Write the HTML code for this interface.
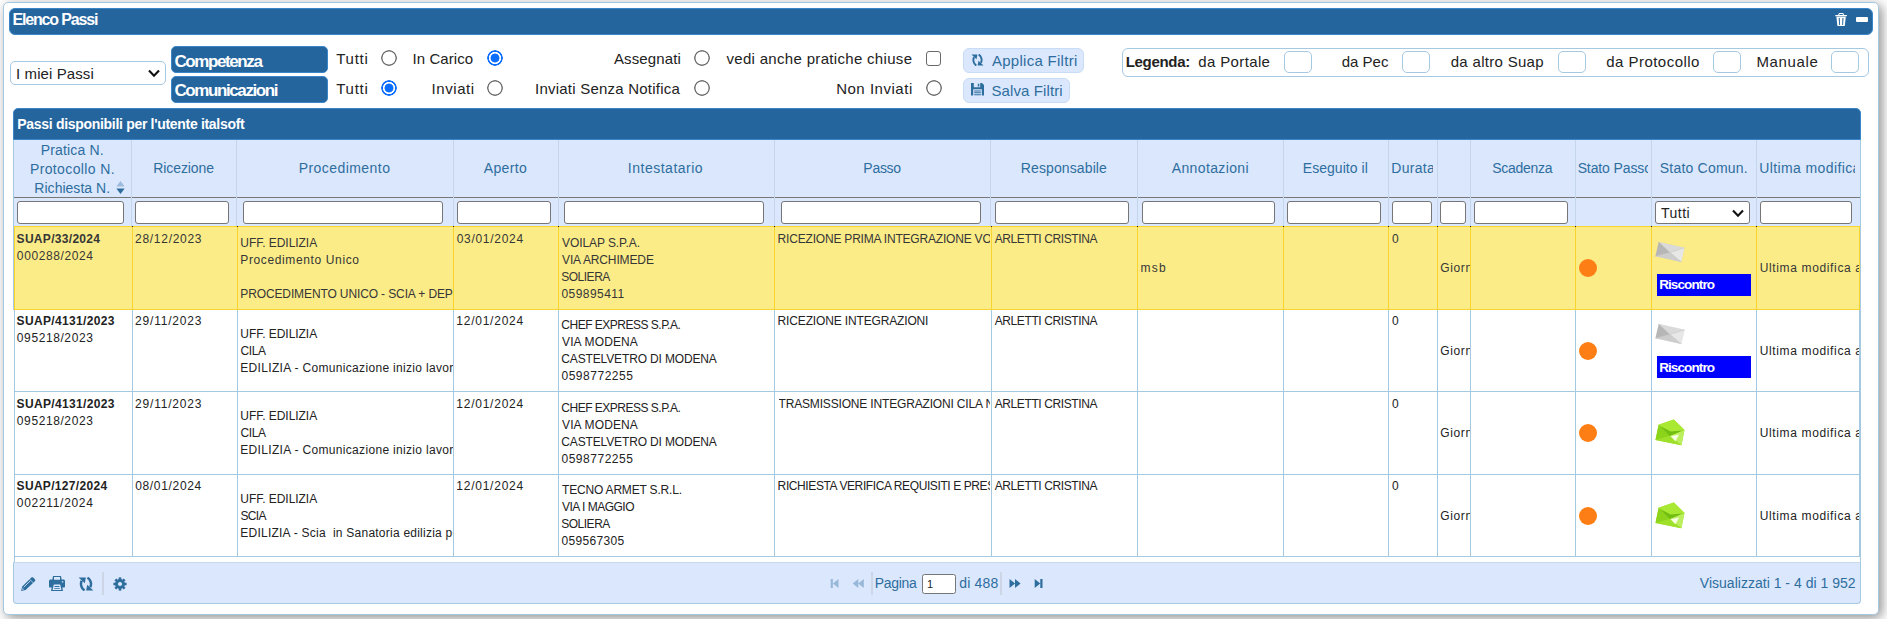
<!DOCTYPE html>
<html lang="it"><head><meta charset="utf-8"><title>Elenco Passi</title>
<style>
html,body{margin:0;padding:0}
body{width:1887px;height:619px;overflow:hidden;position:relative;background:#fff;font-family:"Liberation Sans", sans-serif}
div,span.t,svg.a,input,select{position:absolute;box-sizing:border-box}
span.t{white-space:pre;line-height:20px;height:20px}

.bar{background:#24659e;border:1px solid #3b86c8}
input.f,select.f{margin:0;padding:0 3px;border:1px solid #767676;border-radius:3px;background:#fff;height:23px;top:201px;font:12px "Liberation Sans", sans-serif;appearance:none;-webkit-appearance:none;outline:none}
input.r{appearance:none;-webkit-appearance:none;margin:0;width:16px;height:16px;border:0;border-radius:50%;background:radial-gradient(circle,#fff 0,#fff 6.2px,#707070 6.8px,#707070 7.6px,rgba(112,112,112,0) 8.2px)}
input.r.c{background:radial-gradient(circle,#0d6efd 0,#0d6efd 4.1px,#fff 4.8px,#fff 5.8px,#0d6efd 6.4px,#0d6efd 7.5px,rgba(13,110,253,0) 8.1px)}
input.k{appearance:none;-webkit-appearance:none;margin:0;width:15px;height:15px;border:1px solid #6a6a6a;border-radius:3px;background:#fff}
.lg{border:1px solid #a6c9e2;border-radius:5px;background:#fff;width:28px;height:22px;top:51px}
.btn{background:#dbe7fd;border:1px solid #c9dcf5;border-radius:6px}
.vs{width:1px;background:#c5d6ea;top:140px;height:86px}
.vb{width:1px;background:#a6c9e2}
.hb{height:1px;background:#a6c9e2}

</style></head><body>
<div style="left:3px;top:2px;width:1876px;height:613px;background:#fff;border:1px solid #a6c9e2;border-radius:5px;box-shadow:3px 3px 12px rgba(0,0,0,.44)"></div>
<div class="bar" style="left:9px;top:8px;width:1864px;height:27px;border-radius:6px"></div>
<svg class="a" style="left:1834.6px;top:12.8px" width="12.2" height="13.4" viewBox="0 0 12.2 13.4"><path fill="#fff" fill-rule="evenodd" d="M4 0h4.200l.9 1.900h2.800v1.300H.3V1.900h2.800zM4.600.9l-.4 1h3.800l-.4-1zM1.400 3.700h9.400l-.9 8.600c-.1.600-.5 1.100-1.100 1.100H3.400c-.6 0-1-.5-1.100-1.100zM3.700 4.900l.4 7h.9l-.2-7zm3.700 0-.2 7h.9l.4-7z"/></svg>
<div style="left:1856px;top:17px;width:11.5px;height:5px;background:#fff;border-radius:1px"></div>
<select class="f" style="left:10px;top:61px;width:156px;height:24px;border:1px solid #a6c9e2;border-radius:5px;font-size:15px;color:#222;padding:0 0 0 5px;letter-spacing:.1px"><option>I miei Passi</option></select>
<svg class="a" style="left:147px;top:68px" width="14" height="11" viewBox="0 0 14 11"><path d="M2 2.6 7 7.8 12 2.6" fill="none" stroke="#111" stroke-width="2.1" stroke-linecap="butt"/></svg>
<div class="bar" style="left:171px;top:46px;width:157px;height:27px;border-radius:5px"></div>
<div class="bar" style="left:171px;top:76px;width:157px;height:27px;border-radius:5px"></div>
<input type="radio" class="r" name="a" style="left:381px;top:50px">
<input type="radio" class="r c" name="a" checked style="left:487px;top:50px">
<input type="radio" class="r" name="a" style="left:694px;top:50px">
<input type="checkbox" class="k" style="left:926px;top:51px">
<input type="radio" class="r c" name="b" checked style="left:381px;top:80px">
<input type="radio" class="r" name="b" style="left:487px;top:80px">
<input type="radio" class="r" name="b" style="left:694px;top:80px">
<input type="radio" class="r" name="b" style="left:925.5px;top:80px">
<div class="btn" style="left:963px;top:48px;width:121px;height:25px"></div>
<div class="btn" style="left:963px;top:78px;width:107px;height:25px"></div>
<svg class="a" style="left:971px;top:53.5px" width="13" height="12" viewBox="0 0 13 12"><g fill="#2e6e9e"><path d="M5.300 11.500C2.700 9.700 1.700 6.200 3 3.200" fill="none" stroke="#2e6e9e" stroke-width="2"/><path d="M.5.500h5.900l-.9 4.800z"/><g transform="rotate(180 6.500 6)"><path d="M5.300 11.500C2.700 9.700 1.700 6.200 3 3.200" fill="none" stroke="#2e6e9e" stroke-width="2"/><path d="M.5.500h5.900l-.9 4.800z"/></g></g></svg>
<svg class="a" style="left:971px;top:83.3px" width="13" height="12.5" viewBox="0 0 13 12.5"><path fill="#2e6e9e" fill-rule="evenodd" d="M0 0h11l2 2v10.5H0zM2.8 0v4.2h6.4V0zM6.8 .8h1.5v2.6H6.8zM2.2 6.2v6.3h8.6V6.2zM3.2 7.4h6.6v1H3.2zm0 1.9h6.6v1H3.2zm0 1.9h6.6v1H3.2z"/></svg>
<div style="left:1122px;top:48px;width:747px;height:29px;border:1px solid #a6c9e2;border-radius:6px;background:#fff"></div>
<div class="lg" style="left:1284px"></div>
<div class="lg" style="left:1402px"></div>
<div class="lg" style="left:1558px"></div>
<div class="lg" style="left:1713px"></div>
<div class="lg" style="left:1831px"></div>
<div class="bar" style="left:13px;top:108px;width:1848px;height:32px;border-radius:5px 5px 0 0"></div>
<div style="left:14px;top:140px;width:1847px;height:86px;background:#dbe7fd"></div>
<div style="left:14px;top:197px;width:1847px;height:1px;background:#777"></div>
<div class="vs" style="left:131px"></div>
<div class="vs" style="left:236px"></div>
<div class="vs" style="left:453px"></div>
<div class="vs" style="left:558px"></div>
<div class="vs" style="left:774px"></div>
<div class="vs" style="left:990px"></div>
<div class="vs" style="left:1137px"></div>
<div class="vs" style="left:1283px"></div>
<div class="vs" style="left:1388px"></div>
<div class="vs" style="left:1437px"></div>
<div class="vs" style="left:1470px"></div>
<div class="vs" style="left:1575px"></div>
<div class="vs" style="left:1651px"></div>
<div class="vs" style="left:1756px"></div>
<svg class="a" style="left:115.5px;top:181px" width="9" height="13" viewBox="0 0 9 13"><path d="M4.5 0 8.6 5.6H.4z" fill="#9dbbdc"/><path d="M4.5 13 8.6 7.6H.4z" fill="#2e6e9e"/></svg>
<input class="f" type="text" style="left:17px;width:107px">
<input class="f" type="text" style="left:135px;width:94px">
<input class="f" type="text" style="left:243px;width:200px">
<input class="f" type="text" style="left:457px;width:94px">
<input class="f" type="text" style="left:564px;width:200px">
<input class="f" type="text" style="left:781px;width:200px">
<input class="f" type="text" style="left:995px;width:134px">
<input class="f" type="text" style="left:1142px;width:133px">
<input class="f" type="text" style="left:1287px;width:94px">
<input class="f" type="text" style="left:1392px;width:40px">
<input class="f" type="text" style="left:1440px;width:26px">
<input class="f" type="text" style="left:1474px;width:94px">
<input class="f" type="text" style="left:1760px;width:92px">
<select class="f" style="left:1655px;width:95px;font-size:14px;letter-spacing:.5px;color:#222;padding-left:5px"><option>Tutti</option></select>
<svg class="a" style="left:1731px;top:207.5px" width="14" height="11" viewBox="0 0 14 11"><path d="M2 2.6 7 7.8 12 2.6" fill="none" stroke="#111" stroke-width="2.1"/></svg>
<div style="left:13px;top:140px;width:1px;height:170px;background:#a6c9e2"></div>
<div style="left:14px;top:310px;width:1px;height:253px;background:#a6c9e2"></div>
<div style="left:1859px;top:310px;width:1px;height:247px;background:#a6c9e2"></div>
<div style="left:1860px;top:140px;width:1px;height:460px;background:#a6c9e2"></div>
<div style="left:14px;top:226px;width:1846px;height:84px;background:#fbec88;border:1px solid #fad42e"></div>
<div style="left:132px;top:226px;width:1px;height:84px;background:#fad42e"></div>
<div class="vb" style="left:132px;top:310px;height:247px"></div>
<div style="left:132px;top:226px;width:1px;height:1px;background:#222"></div>
<div style="left:237px;top:226px;width:1px;height:84px;background:#fad42e"></div>
<div class="vb" style="left:237px;top:310px;height:247px"></div>
<div style="left:237px;top:226px;width:1px;height:1px;background:#222"></div>
<div style="left:453px;top:226px;width:1px;height:84px;background:#fad42e"></div>
<div class="vb" style="left:453px;top:310px;height:247px"></div>
<div style="left:453px;top:226px;width:1px;height:1px;background:#222"></div>
<div style="left:558px;top:226px;width:1px;height:84px;background:#fad42e"></div>
<div class="vb" style="left:558px;top:310px;height:247px"></div>
<div style="left:558px;top:226px;width:1px;height:1px;background:#222"></div>
<div style="left:774px;top:226px;width:1px;height:84px;background:#fad42e"></div>
<div class="vb" style="left:774px;top:310px;height:247px"></div>
<div style="left:774px;top:226px;width:1px;height:1px;background:#222"></div>
<div style="left:991px;top:226px;width:1px;height:84px;background:#fad42e"></div>
<div class="vb" style="left:991px;top:310px;height:247px"></div>
<div style="left:991px;top:226px;width:1px;height:1px;background:#222"></div>
<div style="left:1137px;top:226px;width:1px;height:84px;background:#fad42e"></div>
<div class="vb" style="left:1137px;top:310px;height:247px"></div>
<div style="left:1137px;top:226px;width:1px;height:1px;background:#222"></div>
<div style="left:1283px;top:226px;width:1px;height:84px;background:#fad42e"></div>
<div class="vb" style="left:1283px;top:310px;height:247px"></div>
<div style="left:1283px;top:226px;width:1px;height:1px;background:#222"></div>
<div style="left:1388px;top:226px;width:1px;height:84px;background:#fad42e"></div>
<div class="vb" style="left:1388px;top:310px;height:247px"></div>
<div style="left:1388px;top:226px;width:1px;height:1px;background:#222"></div>
<div style="left:1437px;top:226px;width:1px;height:84px;background:#fad42e"></div>
<div class="vb" style="left:1437px;top:310px;height:247px"></div>
<div style="left:1437px;top:226px;width:1px;height:1px;background:#222"></div>
<div style="left:1470px;top:226px;width:1px;height:84px;background:#fad42e"></div>
<div class="vb" style="left:1470px;top:310px;height:247px"></div>
<div style="left:1470px;top:226px;width:1px;height:1px;background:#222"></div>
<div style="left:1575px;top:226px;width:1px;height:84px;background:#fad42e"></div>
<div class="vb" style="left:1575px;top:310px;height:247px"></div>
<div style="left:1575px;top:226px;width:1px;height:1px;background:#222"></div>
<div style="left:1651px;top:226px;width:1px;height:84px;background:#fad42e"></div>
<div class="vb" style="left:1651px;top:310px;height:247px"></div>
<div style="left:1651px;top:226px;width:1px;height:1px;background:#222"></div>
<div style="left:1756px;top:226px;width:1px;height:84px;background:#fad42e"></div>
<div class="vb" style="left:1756px;top:310px;height:247px"></div>
<div style="left:1756px;top:226px;width:1px;height:1px;background:#222"></div>
<div class="hb" style="left:14px;top:391px;width:1847px"></div>
<div class="hb" style="left:14px;top:474px;width:1847px"></div>
<div class="hb" style="left:14px;top:556px;width:1847px"></div>
<div style="left:1579px;top:258.8px;width:18px;height:18px;border-radius:50%;background:#fd7e14"></div>
<svg class="a" style="left:1652.9px;top:237.4px" width="34" height="30" viewBox="-17 -15 34 30"><g transform="rotate(12.9)"><rect x="-13.4" y="-7.500" width="26.800" height="15" fill="#bdbdbd" opacity=".35"/><path d="M-13.200-7.300H13.200L0 .4z" fill="#dadada"/><path d="M13.200-7.300V7.300L0 .4z" fill="#e7e7e7"/><path d="M-13.200 7.300H13.200L0 .4z" fill="#cdcdcd"/><path d="M-13.200-7.300V7.300L0 .4z" fill="#b6b6b6"/><path d="M-13.200-7.300 0 .4 13.200-7.300M-13.200 7.300 0 .4 13.200 7.300" fill="none" stroke="#c4c4c4" stroke-width=".5"/></g></svg>
<div style="left:1657px;top:274px;width:94px;height:22px;background:#0000ff"></div>
<div style="left:1579px;top:341.8px;width:18px;height:18px;border-radius:50%;background:#fd7e14"></div>
<svg class="a" style="left:1652.9px;top:319.4px" width="34" height="30" viewBox="-17 -15 34 30"><g transform="rotate(12.9)"><rect x="-13.4" y="-7.500" width="26.800" height="15" fill="#bdbdbd" opacity=".35"/><path d="M-13.200-7.300H13.200L0 .4z" fill="#dadada"/><path d="M13.200-7.300V7.300L0 .4z" fill="#e7e7e7"/><path d="M-13.200 7.300H13.200L0 .4z" fill="#cdcdcd"/><path d="M-13.200-7.300V7.300L0 .4z" fill="#b6b6b6"/><path d="M-13.200-7.300 0 .4 13.200-7.300M-13.200 7.300 0 .4 13.200 7.300" fill="none" stroke="#c4c4c4" stroke-width=".5"/></g></svg>
<div style="left:1657px;top:356px;width:94px;height:22px;background:#0000ff"></div>
<div style="left:1579px;top:423.8px;width:18px;height:18px;border-radius:50%;background:#fd7e14"></div>
<svg class="a" style="left:1652px;top:412.9px" width="36" height="40" viewBox="-18 -22 36 40"><g transform="rotate(11.4)"><path d="M-13.200-7.850.7-16 13.200-7.850V7.850H-13.200z" fill="#9ade26"/><path d="M-13.200-7.850.7-16 13.200-7.850 0 1z" fill="#a9e833"/><path d="M-12-7 0 1.500 12-7 0 -3.500z" fill="#72bd12"/><path d="M-13.200-7.850V7.850L0 1z" fill="#8cd41c"/><path d="M13.200-7.850V7.850L0 1z" fill="#bcef5e"/><path d="M-13.200 7.850H13.200L0 1z" fill="#9fe02b"/><path d="M.8 1.200 9-2.200 6.500 5z" fill="#f6ffe4"/></g></svg>
<div style="left:1579px;top:506.8px;width:18px;height:18px;border-radius:50%;background:#fd7e14"></div>
<svg class="a" style="left:1652px;top:495.5px" width="36" height="40" viewBox="-18 -22 36 40"><g transform="rotate(11.4)"><path d="M-13.200-7.850.7-16 13.200-7.850V7.850H-13.200z" fill="#9ade26"/><path d="M-13.200-7.850.7-16 13.200-7.850 0 1z" fill="#a9e833"/><path d="M-12-7 0 1.500 12-7 0 -3.500z" fill="#72bd12"/><path d="M-13.200-7.850V7.850L0 1z" fill="#8cd41c"/><path d="M13.200-7.850V7.850L0 1z" fill="#bcef5e"/><path d="M-13.200 7.850H13.200L0 1z" fill="#9fe02b"/><path d="M.8 1.200 9-2.200 6.500 5z" fill="#f6ffe4"/></g></svg>
<div style="left:13px;top:562px;width:1848px;height:42px;background:#dbe7fd;border:1px solid #a6c9e2;border-top-color:#c5dbec;border-radius:0 0 4px 4px"></div>
<svg class="a" style="left:19px;top:575px" width="18" height="18" viewBox="-9 -9 18 18"><g transform="translate(-.2 .5) rotate(-44)"><path fill="#2e6e9e" d="M-9.300 0-5.400-2.500H7.400c.8 0 1.300.5 1.300 1.300V1.200c0 .8-.5 1.300-1.300 1.300H-5.400z"/><path d="M-4.800-.9H4.300" stroke="#dbe7fd" stroke-width=".8"/><path d="M5 -2.500V2.500" stroke="#dbe7fd" stroke-width=".7"/><path d="M-7.600-.2-6.200-1-6.200.9z" fill="#dbe7fd"/></g></svg>
<svg class="a" style="left:49px;top:576px" width="16" height="15" viewBox="0 0 16 15"><path fill="#2e6e9e" fill-rule="evenodd" d="M4 0h8l.6 3.500H14.500c.8 0 1.500.7 1.500 1.500v5.500c0 .5-.4 1-1 1H13.300l.7 3.500H2l.7-3.500H1c-.6 0-1-.5-1-1V5c0-.8.7-1.500 1.500-1.500H3.400zM5 1v2.800h6V1zM4.800 8.500 3.600 14h8.800L11.200 8.500zM12.800 5.200v1.400h1.500V5.200zM5.600 10h4.800v.9H5.600zm-.4 1.900h5.600v.9H5.200z"/></svg>
<svg class="a" style="left:78px;top:576.8px" width="16" height="14" viewBox="0 0 13 12" preserveAspectRatio="none"><g fill="#2e6e9e"><path d="M5.300 11.500C2.700 9.700 1.700 6.200 3 3.200" fill="none" stroke="#2e6e9e" stroke-width="2"/><path d="M.5.500h5.900l-.9 4.800z"/><g transform="rotate(180 6.500 6)"><path d="M5.300 11.500C2.700 9.700 1.700 6.200 3 3.200" fill="none" stroke="#2e6e9e" stroke-width="2"/><path d="M.5.500h5.900l-.9 4.800z"/></g></g></svg>
<div style="left:102px;top:572px;width:2px;height:23px;background:#ccd6e6"></div>
<svg class="a" style="left:112px;top:575.600px" width="16" height="16" viewBox="-8 -8 16 16"><g fill="#2e6e9e"><circle r="4.900"/><rect x="-1.300" y="-6.600" width="2.600" height="4" transform="rotate(0)"/><rect x="-1.300" y="-6.600" width="2.600" height="4" transform="rotate(45)"/><rect x="-1.300" y="-6.600" width="2.600" height="4" transform="rotate(90)"/><rect x="-1.300" y="-6.600" width="2.600" height="4" transform="rotate(135)"/><rect x="-1.300" y="-6.600" width="2.600" height="4" transform="rotate(180)"/><rect x="-1.300" y="-6.600" width="2.600" height="4" transform="rotate(225)"/><rect x="-1.300" y="-6.600" width="2.600" height="4" transform="rotate(270)"/><rect x="-1.300" y="-6.600" width="2.600" height="4" transform="rotate(315)"/></g><circle r="2.100" fill="#dbe7fd"/></svg>
<svg class="a" style="left:830px;top:578px;opacity:.38" width="10" height="11" viewBox="0 0 10 11"><path fill="#2e6e9e" d="M.7 1h2.200v9H.7z M8.5 1L2.9 5.5L8.5 10Z"/></svg>
<svg class="a" style="left:852px;top:578px;opacity:.38" width="13" height="11" viewBox="0 0 13 11"><path fill="#2e6e9e" d="M6.3 1L0.7 5.5L6.3 10Z M11.8 1L6.2 5.5L11.8 10Z"/></svg>
<div style="left:871px;top:572px;width:2px;height:23px;background:#ccd6e6"></div>
<input class="f" type="text" value="1" style="left:922px;top:574px;width:34px;height:20px;padding:0 0 0 4px;font-size:11px;color:#222;border-radius:2.5px">
<div style="left:1000px;top:572px;width:2px;height:23px;background:#ccd6e6"></div>
<svg class="a" style="left:1009px;top:578px" width="13" height="11" viewBox="0 0 13 11"><path fill="#2e6e9e" d="M0.5 1L6.1 5.5L0.5 10Z M6 1L11.6 5.5L6 10Z"/></svg>
<svg class="a" style="left:1034px;top:578px" width="10" height="11" viewBox="0 0 10 11"><path fill="#2e6e9e" d="M0.7 1L6.3 5.5L0.7 10Z M6.300 1h2.200v9H6.300z"/></svg>
<span class="t" style="left:12.49px;top:10px;font-size:16px;color:#fff;font-weight:700;letter-spacing:-1.164px;">Elenco Passi</span>
<span class="t" style="left:174.47px;top:52px;font-size:17px;color:#fff;font-weight:700;letter-spacing:-1.404px;">Competenza</span>
<span class="t" style="left:174.47px;top:81px;font-size:17px;color:#fff;font-weight:700;letter-spacing:-1.403px;">Comunicazioni</span>
<span class="t" style="left:336.21px;top:49px;font-size:15px;color:#222;letter-spacing:0.767px;">Tutti</span>
<span class="t" style="left:412.51px;top:49px;font-size:15px;color:#222;letter-spacing:0.085px;">In Carico</span>
<span class="t" style="left:613.94px;top:49px;font-size:15px;color:#222;letter-spacing:0.12px;">Assegnati</span>
<span class="t" style="left:726.44px;top:49px;font-size:15px;color:#222;letter-spacing:0.318px;">vedi anche pratiche chiuse</span>
<span class="t" style="left:336.21px;top:79px;font-size:15px;color:#222;letter-spacing:0.767px;">Tutti</span>
<span class="t" style="left:431.61px;top:79px;font-size:15px;color:#222;letter-spacing:0.562px;">Inviati</span>
<span class="t" style="left:535.01px;top:79px;font-size:15px;color:#222;letter-spacing:0.228px;">Inviati Senza Notifica</span>
<span class="t" style="left:836.14px;top:79px;font-size:15px;color:#222;letter-spacing:0.526px;">Non Inviati</span>
<span class="t" style="left:991.94px;top:51px;font-size:15px;color:#2e6e9e;letter-spacing:0.28px;">Applica Filtri</span>
<span class="t" style="left:991.42px;top:81px;font-size:15px;color:#2e6e9e;letter-spacing:0.115px;">Salva Filtri</span>
<span class="t" style="left:1125.69px;top:52px;font-size:15px;color:#222;font-weight:700;letter-spacing:-0.298px;">Legenda:</span>
<span class="t" style="left:1198.32px;top:52px;font-size:15px;color:#222;letter-spacing:0.362px;">da Portale</span>
<span class="t" style="left:1341.72px;top:52px;font-size:15px;color:#222;letter-spacing:-0.001px;">da Pec</span>
<span class="t" style="left:1450.72px;top:52px;font-size:15px;color:#222;letter-spacing:0.304px;">da altro Suap</span>
<span class="t" style="left:1606.22px;top:52px;font-size:15px;color:#222;letter-spacing:0.47px;">da Protocollo</span>
<span class="t" style="left:1756.44px;top:52px;font-size:15px;color:#222;letter-spacing:0.625px;">Manuale</span>
<span class="t" style="left:17.35px;top:114px;font-size:14px;color:#fff;font-weight:700;letter-spacing:-0.308px;">Passi disponibili per l&#x27;utente italsoft</span>
<span class="t" style="left:40.66px;top:140px;font-size:14px;color:#2e6e9e;letter-spacing:0.177px;">Pratica N.</span>
<span class="t" style="left:29.96px;top:159px;font-size:14px;color:#2e6e9e;letter-spacing:0.37px;">Protocollo N.</span>
<span class="t" style="left:34.36px;top:178px;font-size:14px;color:#2e6e9e;letter-spacing:0.017px;">Richiesta N.</span>
<span class="t" style="left:153.26px;top:158px;font-size:14px;color:#2e6e9e;letter-spacing:-0.085px;">Ricezione</span>
<span class="t" style="left:298.76px;top:158px;font-size:14px;color:#2e6e9e;letter-spacing:0.436px;">Procedimento</span>
<span class="t" style="left:483.74px;top:158px;font-size:14px;color:#2e6e9e;letter-spacing:0.344px;">Aperto</span>
<span class="t" style="left:627.83px;top:158px;font-size:14px;color:#2e6e9e;letter-spacing:0.503px;">Intestatario</span>
<span class="t" style="left:863.36px;top:158px;font-size:14px;color:#2e6e9e;letter-spacing:-0.289px;">Passo</span>
<span class="t" style="left:1020.86px;top:158px;font-size:14px;color:#2e6e9e;letter-spacing:0.107px;">Responsabile</span>
<span class="t" style="left:1171.74px;top:158px;font-size:14px;color:#2e6e9e;letter-spacing:0.367px;">Annotazioni</span>
<span class="t" style="left:1302.76px;top:158px;font-size:14px;color:#2e6e9e;letter-spacing:0.05px;">Eseguito il</span>
<span class="t" style="left:1391.36px;top:158px;font-size:14px;color:#2e6e9e;letter-spacing:0.272px;width:41.64px;overflow:hidden;">Durata</span>
<span class="t" style="left:1492.14px;top:158px;font-size:14px;color:#2e6e9e;letter-spacing:-0.268px;">Scadenza</span>
<span class="t" style="left:1577.64px;top:158px;font-size:14px;color:#2e6e9e;letter-spacing:-0.107px;width:70.66px;overflow:hidden;">Stato Passo</span>
<span class="t" style="left:1659.74px;top:158px;font-size:14px;color:#2e6e9e;letter-spacing:0.211px;">Stato Comun.</span>
<span class="t" style="left:1759.29px;top:158px;font-size:14px;color:#2e6e9e;letter-spacing:0.387px;width:95.91px;overflow:hidden;">Ultima modifica</span>
<span class="t" style="left:16.58px;top:229px;font-size:12px;color:#363636;font-weight:700;letter-spacing:0.306px;">SUAP/33/2024</span>
<span class="t" style="left:16.87px;top:246px;font-size:12px;color:#363636;letter-spacing:0.603px;">000288/2024</span>
<span class="t" style="left:135.05px;top:229px;font-size:12px;color:#363636;letter-spacing:0.714px;">28/12/2023</span>
<span class="t" style="left:240.35px;top:233px;font-size:12px;color:#363636;letter-spacing:-0.046px;">UFF. EDILIZIA</span>
<span class="t" style="left:240.31px;top:250px;font-size:12px;color:#363636;letter-spacing:0.627px;">Procedimento Unico</span>
<span class="t" style="left:240.31px;top:284px;font-size:12px;color:#363636;letter-spacing:-0.121px;width:212.29px;overflow:hidden;">PROCEDIMENTO UNICO - SCIA + DEPOSITO</span>
<span class="t" style="left:456.67px;top:229px;font-size:12px;color:#363636;letter-spacing:0.715px;">03/01/2024</span>
<span class="t" style="left:562.04px;top:233px;font-size:12px;color:#363636;letter-spacing:-0.084px;">VOILAP S.P.A.</span>
<span class="t" style="left:562.04px;top:250px;font-size:12px;color:#363636;letter-spacing:-0.125px;">VIA ARCHIMEDE</span>
<span class="t" style="left:561.2px;top:267px;font-size:12px;color:#363636;letter-spacing:-0.479px;">SOLIERA</span>
<span class="t" style="left:561.47px;top:284px;font-size:12px;color:#363636;letter-spacing:0.451px;">059895411</span>
<span class="t" style="left:777.61px;top:229px;font-size:12px;color:#363636;letter-spacing:-0.196px;width:212.39px;overflow:hidden;">RICEZIONE PRIMA INTEGRAZIONE VOLONTARIA</span>
<span class="t" style="left:994.64px;top:229px;font-size:12px;color:#363636;letter-spacing:-0.384px;">ARLETTI CRISTINA</span>
<span class="t" style="left:1140.41px;top:258px;font-size:12px;color:#363636;letter-spacing:1.309px;">msb</span>
<span class="t" style="left:1392.07px;top:229px;font-size:12px;color:#363636;">0</span>
<span class="t" style="left:1440.34px;top:258px;font-size:12px;color:#363636;letter-spacing:0.6px;width:29.26px;overflow:hidden;">Giorni</span>
<span class="t" style="left:1659.17px;top:275px;font-size:13.5px;color:#fff;font-weight:700;letter-spacing:-0.897px;">Riscontro</span>
<span class="t" style="left:1759.65px;top:258px;font-size:12px;color:#363636;letter-spacing:0.648px;width:99.85px;overflow:hidden;">Ultima modifica alle</span>
<span class="t" style="left:16.58px;top:311px;font-size:12px;color:#222;font-weight:700;letter-spacing:0.344px;">SUAP/4131/2023</span>
<span class="t" style="left:16.87px;top:328px;font-size:12px;color:#222;letter-spacing:0.591px;">095218/2023</span>
<span class="t" style="left:135.05px;top:311px;font-size:12px;color:#222;letter-spacing:0.803px;">29/11/2023</span>
<span class="t" style="left:240.35px;top:324px;font-size:12px;color:#222;letter-spacing:-0.046px;">UFF. EDILIZIA</span>
<span class="t" style="left:240.54px;top:341px;font-size:12px;color:#222;letter-spacing:-0.387px;">CILA</span>
<span class="t" style="left:240.31px;top:358px;font-size:12px;color:#222;letter-spacing:0.322px;width:212.29px;overflow:hidden;">EDILIZIA - Comunicazione inizio lavori asseverata</span>
<span class="t" style="left:456.35px;top:311px;font-size:12px;color:#222;letter-spacing:0.75px;">12/01/2024</span>
<span class="t" style="left:561.34px;top:315px;font-size:12px;color:#222;letter-spacing:-0.503px;">CHEF EXPRESS S.P.A.</span>
<span class="t" style="left:562.04px;top:332px;font-size:12px;color:#222;letter-spacing:0.127px;">VIA MODENA</span>
<span class="t" style="left:561.34px;top:349px;font-size:12px;color:#222;letter-spacing:-0.146px;">CASTELVETRO DI MODENA</span>
<span class="t" style="left:561.47px;top:366px;font-size:12px;color:#222;letter-spacing:0.521px;">0598772255</span>
<span class="t" style="left:777.61px;top:311px;font-size:12px;color:#222;letter-spacing:-0.151px;width:212.39px;overflow:hidden;">RICEZIONE INTEGRAZIONI</span>
<span class="t" style="left:994.64px;top:311px;font-size:12px;color:#222;letter-spacing:-0.384px;">ARLETTI CRISTINA</span>
<span class="t" style="left:1392.07px;top:311px;font-size:12px;color:#222;">0</span>
<span class="t" style="left:1440.34px;top:341px;font-size:12px;color:#222;letter-spacing:0.6px;width:29.26px;overflow:hidden;">Giorni</span>
<span class="t" style="left:1659.17px;top:358px;font-size:13.5px;color:#fff;font-weight:700;letter-spacing:-0.897px;">Riscontro</span>
<span class="t" style="left:1759.65px;top:341px;font-size:12px;color:#222;letter-spacing:0.648px;width:99.85px;overflow:hidden;">Ultima modifica alle</span>
<span class="t" style="left:16.58px;top:394px;font-size:12px;color:#222;font-weight:700;letter-spacing:0.344px;">SUAP/4131/2023</span>
<span class="t" style="left:16.87px;top:411px;font-size:12px;color:#222;letter-spacing:0.591px;">095218/2023</span>
<span class="t" style="left:135.05px;top:394px;font-size:12px;color:#222;letter-spacing:0.803px;">29/11/2023</span>
<span class="t" style="left:240.35px;top:406px;font-size:12px;color:#222;letter-spacing:-0.046px;">UFF. EDILIZIA</span>
<span class="t" style="left:240.54px;top:423px;font-size:12px;color:#222;letter-spacing:-0.387px;">CILA</span>
<span class="t" style="left:240.31px;top:440px;font-size:12px;color:#222;letter-spacing:0.322px;width:212.29px;overflow:hidden;">EDILIZIA - Comunicazione inizio lavori asseverata</span>
<span class="t" style="left:456.35px;top:394px;font-size:12px;color:#222;letter-spacing:0.75px;">12/01/2024</span>
<span class="t" style="left:561.34px;top:398px;font-size:12px;color:#222;letter-spacing:-0.503px;">CHEF EXPRESS S.P.A.</span>
<span class="t" style="left:562.04px;top:415px;font-size:12px;color:#222;letter-spacing:0.127px;">VIA MODENA</span>
<span class="t" style="left:561.34px;top:432px;font-size:12px;color:#222;letter-spacing:-0.146px;">CASTELVETRO DI MODENA</span>
<span class="t" style="left:561.47px;top:449px;font-size:12px;color:#222;letter-spacing:0.521px;">0598772255</span>
<span class="t" style="left:778.54px;top:394px;font-size:12px;color:#222;letter-spacing:-0.167px;width:211.46px;overflow:hidden;">TRASMISSIONE INTEGRAZIONI CILA N. 4131</span>
<span class="t" style="left:994.64px;top:394px;font-size:12px;color:#222;letter-spacing:-0.384px;">ARLETTI CRISTINA</span>
<span class="t" style="left:1392.07px;top:394px;font-size:12px;color:#222;">0</span>
<span class="t" style="left:1440.34px;top:423px;font-size:12px;color:#222;letter-spacing:0.6px;width:29.26px;overflow:hidden;">Giorni</span>
<span class="t" style="left:1759.65px;top:423px;font-size:12px;color:#222;letter-spacing:0.648px;width:99.85px;overflow:hidden;">Ultima modifica alle</span>
<span class="t" style="left:16.58px;top:476px;font-size:12px;color:#222;font-weight:700;letter-spacing:0.316px;">SUAP/127/2024</span>
<span class="t" style="left:16.87px;top:493px;font-size:12px;color:#222;letter-spacing:0.683px;">002211/2024</span>
<span class="t" style="left:135.17px;top:476px;font-size:12px;color:#222;letter-spacing:0.67px;">08/01/2024</span>
<span class="t" style="left:240.35px;top:489px;font-size:12px;color:#222;letter-spacing:-0.046px;">UFF. EDILIZIA</span>
<span class="t" style="left:240.4px;top:506px;font-size:12px;color:#222;letter-spacing:-0.625px;">SCIA</span>
<span class="t" style="left:240.31px;top:523px;font-size:12px;color:#222;letter-spacing:0.234px;width:212.29px;overflow:hidden;">EDILIZIA - Scia  in Sanatoria edilizia per opere</span>
<span class="t" style="left:456.35px;top:476px;font-size:12px;color:#222;letter-spacing:0.75px;">12/01/2024</span>
<span class="t" style="left:562.04px;top:480px;font-size:12px;color:#222;letter-spacing:-0.188px;">TECNO ARMET S.R.L.</span>
<span class="t" style="left:562.04px;top:497px;font-size:12px;color:#222;letter-spacing:-0.504px;">VIA I MAGGIO</span>
<span class="t" style="left:561.2px;top:514px;font-size:12px;color:#222;letter-spacing:-0.479px;">SOLIERA</span>
<span class="t" style="left:561.47px;top:531px;font-size:12px;color:#222;letter-spacing:0.326px;">059567305</span>
<span class="t" style="left:777.61px;top:476px;font-size:12px;color:#222;letter-spacing:-0.399px;width:212.39px;overflow:hidden;">RICHIESTA VERIFICA REQUISITI E PRESENTAZIONE</span>
<span class="t" style="left:994.64px;top:476px;font-size:12px;color:#222;letter-spacing:-0.384px;">ARLETTI CRISTINA</span>
<span class="t" style="left:1392.07px;top:476px;font-size:12px;color:#222;">0</span>
<span class="t" style="left:1440.34px;top:506px;font-size:12px;color:#222;letter-spacing:0.6px;width:29.26px;overflow:hidden;">Giorni</span>
<span class="t" style="left:1759.65px;top:506px;font-size:12px;color:#222;letter-spacing:0.648px;width:99.85px;overflow:hidden;">Ultima modifica alle</span>
<span class="t" style="left:874.76px;top:573px;font-size:14px;color:#2e6e9e;letter-spacing:-0.314px;">Pagina</span>
<span class="t" style="left:959.24px;top:573px;font-size:14px;color:#2e6e9e;letter-spacing:0.164px;">di 488</span>
<span class="t" style="left:1699.84px;top:573px;font-size:14px;color:#2e6e9e;letter-spacing:0.013px;">Visualizzati 1 - 4 di 1 952</span>
</body></html>
